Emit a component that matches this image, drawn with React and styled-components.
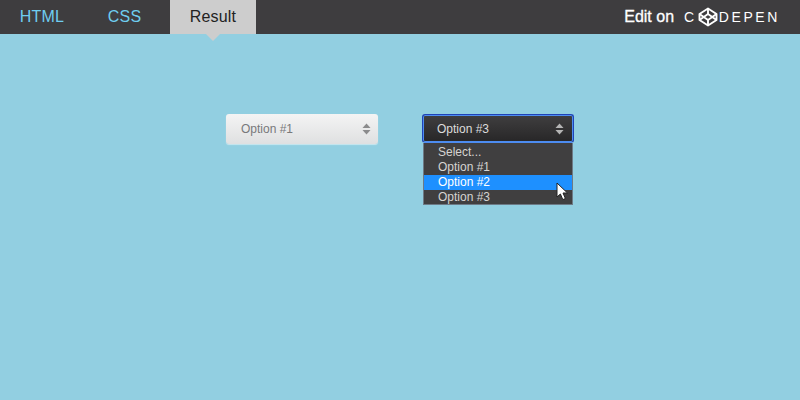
import React from "react";
import styled, { createGlobalStyle } from "styled-components";

const GlobalStyle = createGlobalStyle`
  html, body {
    margin: 0;
    padding: 0;
    height: 100%;
    background: #92cfe1;
    overflow: hidden;
    font-family: "Liberation Sans", Arial, sans-serif;
  }
`;

const Page = styled.div`
  width: 800px;
  height: 400px;
  background: #92cfe1;
`;

const TopBar = styled.header`
  display: flex;
  justify-content: space-between;
  height: 34px;
  background: #3e3d3f;
`;

const Tabs = styled.nav`
  display: flex;
`;

const Tab = styled.a`
  position: relative;
  display: flex;
  align-items: center;
  justify-content: center;
  width: ${(p) => p.$width}px;
  margin-left: ${(p) => p.$offset || 0}px;
  font-size: 16px;
  letter-spacing: 0.2px;
  color: ${(p) => (p.$active ? "#222" : "#6fcdf0")};
  background: ${(p) => (p.$active ? "#cdcdcd" : "transparent")};

  ${(p) =>
    p.$active &&
    `&::after {
      content: "";
      position: absolute;
      left: 50%;
      top: 100%;
      margin-left: -7px;
      border-left: 7px solid transparent;
      border-right: 7px solid transparent;
      border-top: 7px solid #cdcdcd;
    }`}
`;

const EditLink = styled.a`
  display: flex;
  align-items: center;
  padding-right: 20px;
  color: #fff;
`;

const EditText = styled.span`
  font-size: 16px;
  letter-spacing: 0;
  -webkit-text-stroke: 0.3px #fff;
  margin-right: 10px;
`;

const Brand = styled.span`
  display: flex;
  align-items: center;
  font-size: 14px;
  letter-spacing: 2.6px;
`;

const BrandMark = styled.svg`
  width: 20px;
  height: 20px;
  margin: 0 1px 0 1px;
`;

const Stage = styled.main`
  display: flex;
  align-items: flex-start;
  padding: 80px 0 0 226px;
`;

const Field = styled.div`
  position: relative;
  width: ${(p) => p.$width}px;
  margin-right: ${(p) => p.$gap || 0}px;
`;

const LightSelect = styled.div`
  display: flex;
  align-items: center;
  justify-content: space-between;
  box-sizing: border-box;
  height: 30px;
  padding: 0 7px 0 15px;
  border-radius: 3px;
  font-size: 12px;
  color: #78797b;
  background: linear-gradient(#f4f4f4, #dfe0e1);
  box-shadow: 0 1px 1px rgba(255, 255, 255, 0.5);
`;

const DarkSelect = styled.div`
  display: flex;
  align-items: center;
  justify-content: space-between;
  box-sizing: border-box;
  height: 29px;
  padding: 0 9px 0 14px;
  border: 1px solid #1f44b8;
  border-bottom-color: #4d8cf0;
  border-radius: 3px;
  font-size: 12px;
  color: #dcdcdc;
  background: linear-gradient(#403f40, #272627);
  box-shadow: inset 0 0 0 1px #4d8cf0;
`;

const Arrows = styled.svg`
  width: 9px;
  height: 12px;
`;

const Dropdown = styled.ul`
  list-style: none;
  box-sizing: border-box;
  width: 150px;
  margin: 0 0 0 1px;
  padding: 2px 0 0;
  height: 62px;
  border: 1px solid #6d7a86;
  border-top: none;
  background: #403f40;
  font-size: 12px;
`;

const Option = styled.li`
  height: 15px;
  line-height: 15px;
  padding-left: 14px;
  color: ${(p) => (p.$hover ? "#fff" : "#d6d4d2")};
  background: ${(p) => (p.$hover ? "#1e90ff" : "transparent")};
`;

const Cursor = styled.svg`
  position: absolute;
  left: 134px;
  top: 68px;
  width: 13px;
  height: 19px;
`;

const UpDown = ({ color }) => (
  <Arrows viewBox="0 0 9 12">
    <path d="M4.5 0.5 L8.5 5 H0.5 Z" fill={color} />
    <path d="M0.5 7 H8.5 L4.5 11.5 Z" fill={color} />
  </Arrows>
);

const App = () => {
  return (
    <Page>
      <GlobalStyle />
      <TopBar>
        <Tabs>
          <Tab $width={84}>HTML</Tab>
          <Tab $width={81}>CSS</Tab>
          <Tab $width={86} $offset={5} $active>
            Result
          </Tab>
        </Tabs>
        <EditLink>
          <EditText>Edit on</EditText>
          <Brand>
            C
            <BrandMark viewBox="0 0 20 20" fill="none" stroke="#fff" strokeWidth="1.9" strokeLinejoin="round">
              <path d="M10 1.5 L18.5 7 V13 L10 18.5 L1.5 13 V7 Z" />
              <path d="M10 1.5 V6.5 M10 13.5 V18.5 M1.5 7 L10 13 L18.5 7 M1.5 13 L10 7 L18.5 13" />
            </BrandMark>
            DEPEN
          </Brand>
        </EditLink>
      </TopBar>
      <Stage>
        <Field $width={152} $gap={44}>
          <LightSelect>
            Option #1
            <UpDown color="#8b8b8c" />
          </LightSelect>
        </Field>
        <Field $width={152}>
          <DarkSelect>
            Option #3
            <UpDown color="#b5b5b5" />
          </DarkSelect>
          <Dropdown>
            <Option>Select...</Option>
            <Option>Option #1</Option>
            <Option $hover>Option #2</Option>
            <Option>Option #3</Option>
          </Dropdown>
          <Cursor viewBox="0 0 13 19">
            <path
              d="M1 1 V15 L4.4 12 L6.8 17.6 L9.4 16.5 L7 11 H11.5 Z"
              fill="#fff"
              stroke="#222"
              strokeWidth="1"
              strokeLinejoin="round"
            />
          </Cursor>
        </Field>
      </Stage>
    </Page>
  );
};

export default App;
